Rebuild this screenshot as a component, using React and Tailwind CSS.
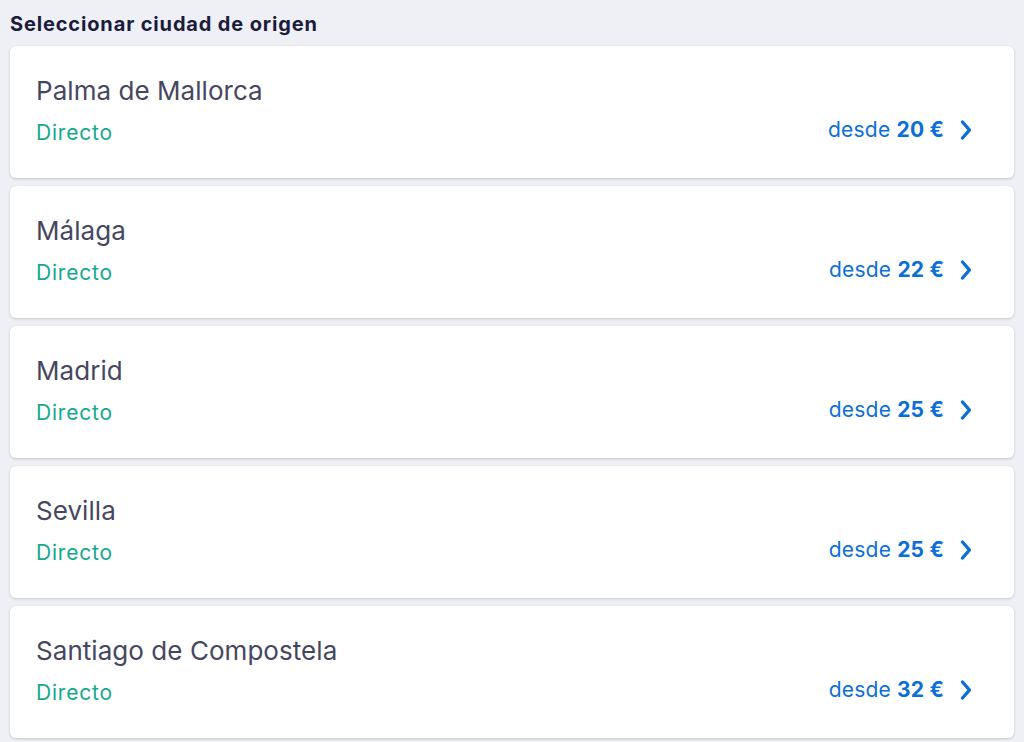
import React from "react";

const items = [
  { city: "Palma de Mallorca", price: "20" },
  { city: "Málaga", price: "22" },
  { city: "Madrid", price: "25" },
  { city: "Sevilla", price: "25" },
  { city: "Santiago de Compostela", price: "32" },
];

function Chevron() {
  return (
    <svg width="14" height="22" viewBox="0 0 14 22" fill="none">
      <path d="M3.5 3 L10.5 11 L3.5 19" stroke="#0b6fd8" strokeWidth="3.4" strokeLinecap="round" strokeLinejoin="round" />
    </svg>
  );
}

export default function App() {
  return (
    <div className="min-h-[742px] w-full bg-[#eff0f5] px-[10px] pt-[10px]" style={{ fontFamily: "Inter, 'Noto Sans', sans-serif" }}>
      <h1 className="text-[20px] leading-[28px] font-bold text-[#1b1c3d] tracking-[0.85px]">Seleccionar ciudad de origen</h1>
      <div className="mt-[8px] flex flex-col gap-[8px]">
        {items.map((it) => (
          <div key={it.city} className="h-[132px] rounded-[6px] bg-white shadow-[0_1px_3px_rgba(0,0,0,0.18)] flex items-end justify-between pl-[26px] pr-[41px] pb-[31px]">
            <div className="flex flex-col gap-[12px]">
              <div className="text-[26px] leading-[32px] text-[#46475f] tracking-[0.05px]">{it.city}</div>
              <div className="text-[21px] leading-[28px] text-[#14a88e] tracking-[0.8px]">Directo</div>
            </div>
            <div className="flex items-center gap-[15px] mb-[4px] text-[#0b6fd8]">
              <div className="text-[21px] leading-[26px] tracking-[0.2px]">
                desde <span className="font-bold">{it.price} €</span>
              </div>
              <Chevron />
            </div>
          </div>
        ))}
      </div>
    </div>
  );
}
